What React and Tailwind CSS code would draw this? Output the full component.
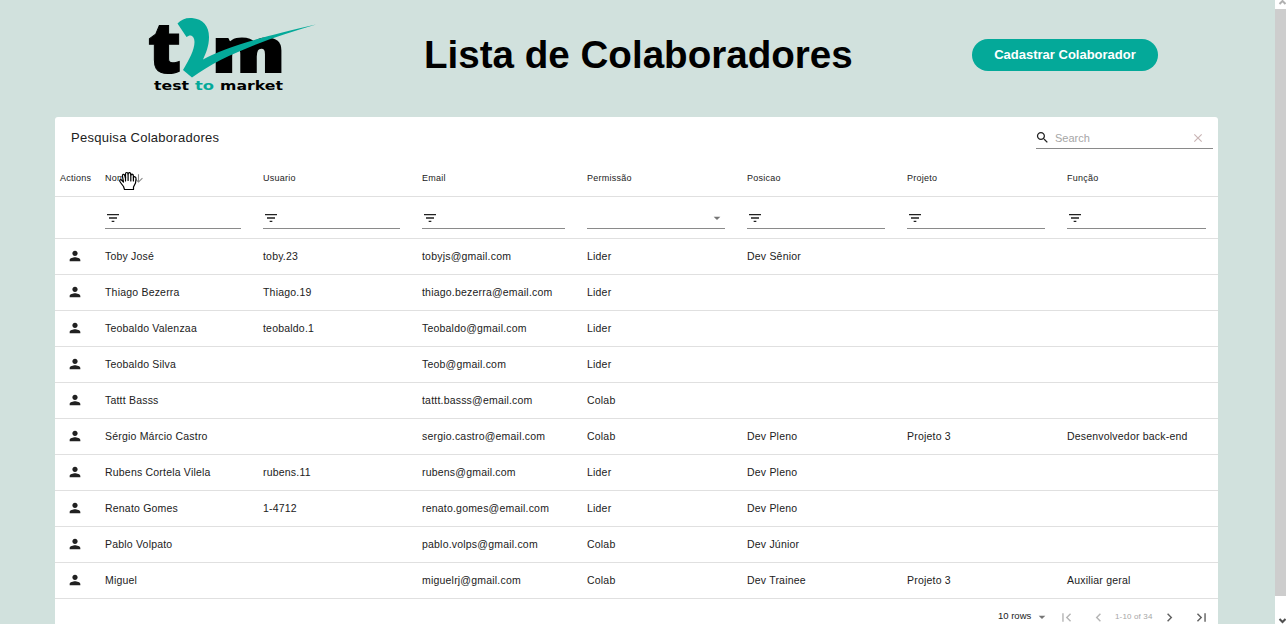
import React from "react";

const COLS = "grid grid-cols-[45px_158px_159px_165px_160px_160px_160px_156px]";

const headers = ["Nome", "Usuario", "Email", "Permissão", "Posicao", "Projeto", "Função"];

const rows = [
  ["Toby José", "toby.23", "tobyjs@gmail.com", "Lider", "Dev Sênior", "", ""],
  ["Thiago Bezerra", "Thiago.19", "thiago.bezerra@email.com", "Lider", "", "", ""],
  ["Teobaldo Valenzaa", "teobaldo.1", "Teobaldo@gmail.com", "Lider", "", "", ""],
  ["Teobaldo Silva", "", "Teob@gmail.com", "Lider", "", "", ""],
  ["Tattt Basss", "", "tattt.basss@email.com", "Colab", "", "", ""],
  ["Sérgio Márcio Castro", "", "sergio.castro@email.com", "Colab", "Dev Pleno", "Projeto 3", "Desenvolvedor back-end"],
  ["Rubens Cortela Vilela", "rubens.11", "rubens@gmail.com", "Lider", "Dev Pleno", "", ""],
  ["Renato Gomes", "1-4712", "renato.gomes@email.com", "Lider", "Dev Pleno", "", ""],
  ["Pablo Volpato", "", "pablo.volps@gmail.com", "Colab", "Dev Júnior", "", ""],
  ["Miguel", "", "miguelrj@gmail.com", "Colab", "Dev Trainee", "Projeto 3", "Auxiliar geral"],
];

function Icon({ d, className }) {
  return (
    <svg viewBox="0 0 24 24" fill="currentColor" className={className}>
      <path d={d} />
    </svg>
  );
}

const PERSON = "M12 12c2.21 0 4-1.79 4-4s-1.79-4-4-4-4 1.79-4 4 1.79 4 4 4zm0 2c-2.67 0-8 1.34-8 4v2h16v-2c0-2.66-5.33-4-8-4z";
const FILTER = "M10 18h4v-2h-4v2zM3 6v2h18V6H3zm3 7h12v-2H6v2z";
const SEARCH = "M15.5 14h-.79l-.28-.27C15.41 12.59 16 11.11 16 9.5 16 5.91 13.09 3 9.5 3S3 5.91 3 9.5 5.91 16 9.5 16c1.61 0 3.09-.59 4.23-1.57l.27.28v.79l5 4.99L20.49 19l-4.99-5zm-6 0C7.01 14 5 11.99 5 9.5S7.01 5 9.5 5 14 7.01 14 9.5 11.99 14 9.5 14z";
const CLEAR = "M19 6.41L17.59 5 12 10.59 6.41 5 5 6.41 10.59 12 5 17.59 6.41 19 12 13.41 17.59 19 19 17.59 13.41 12z";
const DROP = "M7 10l5 5 5-5z";
const DOWN = "M20 12l-1.41-1.41L13 16.17V4h-2v12.17l-5.58-5.59L4 12l8 8 8-8z";
const FIRST = "M18.41 16.59L13.82 12l4.59-4.59L17 6l-6 6 6 6zM6 6h2v12H6z";
const LAST = "M5.59 7.41L10.18 12l-4.59 4.59L7 18l6-6-6-6zM16 6h2v12h-2z";
const PREV = "M15.41 7.41L14 6l-6 6 6 6 1.41-1.41L10.83 12z";
const NEXT = "M10 6L8.59 7.41 13.17 12l-4.58 4.59L10 18l6-6z";

function Logo() {
  return (
    <svg width="170" height="80" viewBox="148 15 170 80" className="block overflow-visible">
      <g fontFamily="Open Sans" fontWeight="800" stroke="#000">
        <text x="147.500" y="72.500" fontSize="71" strokeWidth="1" textLength="34" lengthAdjust="spacingAndGlyphs">t</text>
        <text x="212.200" y="72" fontSize="61" strokeWidth="2.2" textLength="72.500" lengthAdjust="spacingAndGlyphs">m</text>
      </g>
      <path
        d="M177.500 23.500 C181 19.500 186 17.500 192 18 C203 19 209 26 209 37 C209 46 206 53 203 59.500 C224 48 260 37 316 24.500 C270 38 222 55 192 77.500 L183 70 C189 60 194.500 50 194.500 42 C194.500 36 190.500 33.500 186.500 37 Z"
        fill="#04a999"
      />
      <g fontFamily="DejaVu Sans" fontWeight="700" fontSize="13">
        <text x="154" y="90" textLength="35" lengthAdjust="spacingAndGlyphs">test</text>
        <text x="195" y="90" fill="#04a999" textLength="19" lengthAdjust="spacingAndGlyphs">to</text>
        <text x="220" y="90" textLength="63" lengthAdjust="spacingAndGlyphs">market</text>
      </g>
    </svg>
  );
}

function GrabCursor() {
  return (
    <svg viewBox="0 0 20 20" className="absolute left-[14px] top-[-1px] h-5 w-5" fill="#fff" stroke="#000" strokeWidth="1.2" strokeLinejoin="round" strokeLinecap="round">
      <path d="M6.500 18.500 L5.500 15.500 L2.500 11.500 C.5 9 2.500 8 4 9.500 L5.500 11 L4.500 5.500 C4 3 6 2.500 6.700 4.500 L7.500 7 L7.500 3 C7.500 1 10 1 10 3 L10.300 2.500 C10.800 1 12.700 1.500 12.700 3.500 L13 4 C13.800 2.500 15.500 3.500 15.400 5 L15.500 6.500 C16.500 5 18.300 6 18 8 L17.500 12 L15.500 16 L15.500 18.500 Z" />
      <path d="M7.500 6v4M10.100 3v6.500M12.800 4v6M15.400 6v4" fill="none" />
    </svg>
  );
}

export default function App() {
  return (
    <div className="flex h-[624px] w-[1286px] overflow-hidden bg-[#d1e1dd] font-['Liberation_Sans',Arial,sans-serif] text-[#212121]">
      <div className="flex w-[1275px] shrink-0 flex-col">
        <header className="flex h-[117px] shrink-0 items-start pl-[148px] text-black">
          <div className="pt-[15px]">
            <Logo />
          </div>
          <h1 className="w-[546px] pl-[106px] pt-[32px] text-[38.6px] font-bold leading-[46px]">Lista de Colaboradores</h1>
          <button className="ml-[108px] mt-[39px] h-8 w-[186px] rounded-full bg-[#04a999] text-[13px] font-bold text-white">
            Cadastrar Colaborador
          </button>
        </header>

        <main className="ml-[55px] flex h-[540px] w-[1163px] shrink-0 flex-col rounded-[3px] bg-white">
          <div className="flex h-[42px] justify-between pl-4 pr-[5px]">
            <h2 className="pt-[11px] text-[13px] leading-[20px] tracking-[0.27px]">Pesquisa Colaboradores</h2>
            <label className="flex h-8 w-[177px] items-center border-b border-[#8a8a8a] pt-[10px]">
              <Icon d={SEARCH} className="-ml-px mb-px h-[15px] w-[15px]" />
              <span className="flex-1 pl-[5px] pt-px text-[11px] text-[#a6a6a6]">Search</span>
              <Icon d={CLEAR} className="mr-2 h-[14px] w-[14px] text-[#c9b5b5]" />
            </label>
          </div>

          <div className={`${COLS} h-[38px] border-b border-[#e0e0e0] text-[9px] leading-[12px] tracking-[0.25px]`}>
            <div className="pl-[5px] pt-[13px]">Actions</div>
            {headers.map((h) => (
              <div key={h} className="relative flex items-start pl-[5px] pt-[13px]">
                {h}
                {h === "Nome" && (
                  <span className="relative -ml-[26px] flex h-3 w-11">
                    <Icon d={DOWN} className="ml-[28px] h-[13px] w-[13px] shrink-0 text-[#8a8a8a]" />
                    <GrabCursor />
                  </span>
                )}
              </div>
            ))}
          </div>

          <div className={`${COLS} h-[42px] border-b border-[#e0e0e0]`}>
            <div />
            {headers.map((h, i) => (
              <div key={h} className={i === 6 ? "pl-[5px] pr-3" : "pl-[5px] pr-[17px]"}>
                <div className={`flex h-8 border-b border-[#8a8a8a] pt-[13px] ${i === 3 ? "justify-end" : ""}`}>
                  {i === 3 ? (
                    <Icon d={DROP} className="h-4 w-4 text-[#757575]" />
                  ) : (
                    <Icon d={FILTER} className="h-4 w-4" />
                  )}
                </div>
              </div>
            ))}
          </div>

          {rows.map((r) => (
            <div key={r[0]} className={`${COLS} h-9 items-center border-b border-[#e0e0e0] text-[10.5px] tracking-[0.2px]`}>
              <div className="pb-px pl-[11.5px]">
                <Icon d={PERSON} className="h-4 w-4" />
              </div>
              {r.map((c, i) => (
                <div key={i} className="whitespace-nowrap pl-[5px]">{c}</div>
              ))}
            </div>
          ))}

          <footer className="flex h-[35px] items-center pl-[943px] text-[9.5px]">
            <span className="w-[35px] whitespace-nowrap">10 rows</span>
            <Icon d={DROP} className="ml-[1px] mt-px h-4 w-4 text-[#757575]" />
            <Icon d={FIRST} className="ml-[8px] mt-px h-[17px] w-[17px] text-[#b5b5b5]" />
            <Icon d={PREV} className="ml-[15px] mt-px h-[17px] w-[17px] text-[#b5b5b5]" />
            <span className="ml-[8px] w-[39px] whitespace-nowrap text-[8px] tracking-[0.15px] text-[#a6a6a6]">1-10 of 34</span>
            <Icon d={NEXT} className="ml-[7px] mt-px h-[17px] w-[17px] text-[#616161]" />
            <Icon d={LAST} className="ml-[15px] mt-px h-[17px] w-[17px] text-[#616161]" />
          </footer>
        </main>
      </div>

      <aside className="flex w-[11px] shrink-0 flex-col bg-white">
        <svg viewBox="0 0 11 9" className="h-[9px] w-[11px] shrink-0">
          <path d="M4.500 4L7.500 1L10.500 4" fill="none" stroke="#b0b0b0" strokeWidth="2" />
        </svg>
        <div className="h-[587px] shrink-0 bg-[#cdcdcd]" />
        <svg viewBox="0 0 11 28" className="h-7 w-[11px] shrink-0">
          <path d="M4.500 23L7.500 26L10.500 23" fill="none" stroke="#505050" strokeWidth="2" />
        </svg>
      </aside>
    </div>
  );
}
